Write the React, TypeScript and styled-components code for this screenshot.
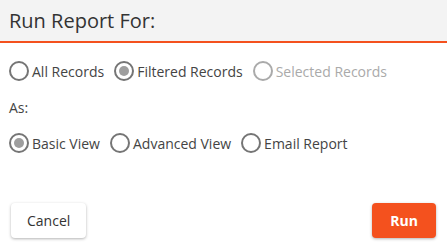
import styled, { createGlobalStyle } from 'styled-components'

const GlobalStyle = createGlobalStyle`
  body {
    margin: 0;
    background: #fff;
    font-family: 'Open Sans', 'Liberation Sans', sans-serif;
  }
`

const Dialog = styled.div`
  width: 447px;
  height: 250px;
  display: flex;
  flex-direction: column;
  background: #fff;
`

const Header = styled.div`
  height: 41px;
  display: flex;
  align-items: center;
  padding: 0 9px;
  background: #f3f3f3;
  border-bottom: 2px solid #f4511e;
`

const Title = styled.h2`
  margin: 0;
  font-size: 20px;
  font-weight: 400;
  color: #333;
`

const Body = styled.div`
  display: flex;
  flex-direction: column;
  gap: 16px;
  padding: 18px 9px 0;
`

const RadioRow = styled.div`
  display: flex;
  align-items: center;
  gap: 10px;
  height: 20px;
`

const Label = styled.div`
  height: 20px;
  display: flex;
  align-items: center;
  font-size: 14px;
  color: #444;
`

const Option = styled.label<{ disabled?: boolean }>`
  display: flex;
  align-items: center;
  gap: 3px;
  font-size: 14px;
  color: ${({ disabled }) => (disabled ? '#aaa' : '#444')};
  cursor: ${({ disabled }) => (disabled ? 'default' : 'pointer')};
`

const Circle = styled.span<{ checked?: boolean; disabled?: boolean }>`
  box-sizing: border-box;
  width: 20px;
  height: 20px;
  border-radius: 50%;
  border: 2px solid ${({ disabled }) => (disabled ? '#aaa' : '#757575')};
  display: flex;
  align-items: center;
  justify-content: center;
  &::after {
    content: '';
    width: 10px;
    height: 10px;
    border-radius: 50%;
    background: ${({ checked }) => (checked ? '#9e9e9e' : 'transparent')};
  }
`

const Footer = styled.div`
  margin-top: auto;
  display: flex;
  justify-content: space-between;
  padding: 0 11px 12px;
`

const Button = styled.button<{ primary?: boolean }>`
  height: 35px;
  padding: 0 ${({ primary }) => (primary ? '18px' : '16px')};
  border: none;
  border-radius: 4px;
  font-family: inherit;
  font-size: 14px;
  font-weight: ${({ primary }) => (primary ? 700 : 400)};
  color: ${({ primary }) => (primary ? '#fff' : '#333')};
  background: ${({ primary }) => (primary ? '#f4511e' : '#fff')};
  box-shadow: 0 1px 3px rgba(0, 0, 0, 0.3);
  cursor: pointer;
`

type Opt = { label: string; checked?: boolean; disabled?: boolean }

const Radio = ({ label, checked, disabled }: Opt) => (
  <Option disabled={disabled}>
    <Circle checked={checked} disabled={disabled} />
    {label}
  </Option>
)

const records: Opt[] = [
  { label: 'All Records' },
  { label: 'Filtered Records', checked: true },
  { label: 'Selected Records', disabled: true },
]

const views: Opt[] = [
  { label: 'Basic View', checked: true },
  { label: 'Advanced View' },
  { label: 'Email Report' },
]

export default function App() {
  return (
    <>
      <GlobalStyle />
      <Dialog>
        <Header>
          <Title>Run Report For:</Title>
        </Header>
        <Body>
          <RadioRow>
            {records.map((o) => (
              <Radio key={o.label} {...o} />
            ))}
          </RadioRow>
          <Label>As:</Label>
          <RadioRow>
            {views.map((o) => (
              <Radio key={o.label} {...o} />
            ))}
          </RadioRow>
        </Body>
        <Footer>
          <Button>Cancel</Button>
          <Button primary>Run</Button>
        </Footer>
      </Dialog>
    </>
  )
}
